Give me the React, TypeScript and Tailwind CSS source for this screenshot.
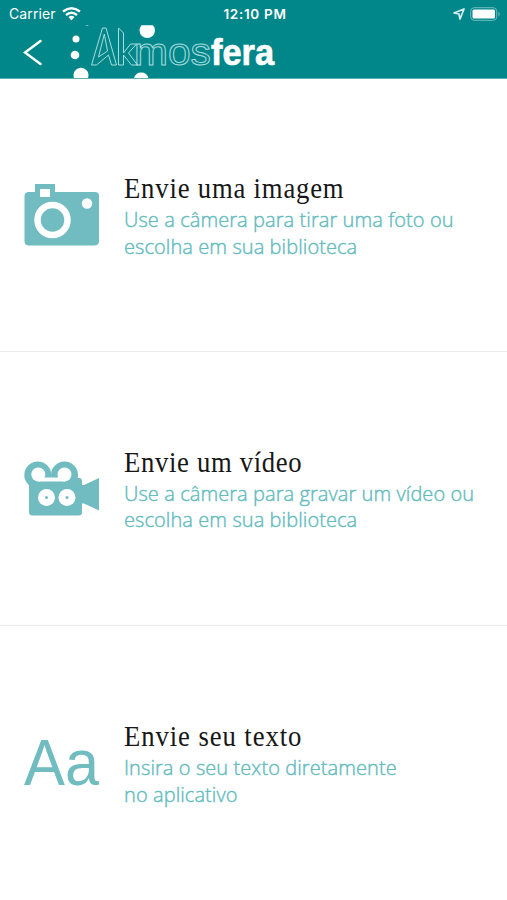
import React from 'react';

interface UploadOption {
  id: string;
  title: string;
  titleSpacing: string;
  rowHeight: string;
  lines: string[];
  icon: React.ReactNode;
}

const CameraIcon = () => (
  <svg width="76" height="62" viewBox="0 0 76 62" fill="#70bcc0">
    <path
      fillRule="evenodd"
      d="M11 0H31V8H71Q75 8 75 12V57Q75 61.500 70 61.500H5Q.500 61.500 .500 57V12Q.500 8 5 8H11ZM16 5V13H26V5Z"
    />
    <circle cx="28.500" cy="36" r="15" stroke="#fff" strokeWidth="6.500" />
    <circle cx="63" cy="19.500" r="5.200" fill="#fff" />
  </svg>
);

const VideoIcon = () => (
  <svg width="76" height="56" viewBox="0 0 76 56" fill="#70bcc0">
    <circle cx="13.800" cy="14" r="13.500" />
    <circle cx="40.500" cy="14" r="13.500" />
    <path d="M5 17H55Q58 17 58 20V24H60L75 17V49.500L60 42.500H58V51Q58 54.500 54.500 54.500H8.500Q5 54.500 5 51Z" />
    <g fill="#fff">
      <circle cx="14.300" cy="13.500" r="7" />
      <circle cx="40.500" cy="13.500" r="7" />
      <path d="M14 16.500H41V20.500H14Z" />
      <circle cx="22.500" cy="36.500" r="8.500" />
      <circle cx="43" cy="36.500" r="8.500" />
    </g>
    <circle cx="22.500" cy="36.500" r="1.500" />
    <circle cx="43" cy="36.500" r="1.500" />
  </svg>
);

const TextIcon = () => (
  <svg width="80" height="84" viewBox="0 0 80 84" className="-mr-1 overflow-visible">
    <text x="0" y="63.500" textLength="75" lengthAdjust="spacingAndGlyphs" fontSize="64" fill="#70bcc0" className="font-['Liberation_Sans',sans-serif]">Aa</text>
  </svg>
);

const OPTIONS: UploadOption[] = [
  {
    id: 'image',
    title: 'Envie uma imagem',
    titleSpacing: 'tracking-[0.88px]',
    rowHeight: 'h-[273px]',
    lines: ['Use a câmera para tirar uma foto ou', 'escolha em sua biblioteca'],
    icon: <CameraIcon />,
  },
  {
    id: 'video',
    title: 'Envie um vídeo',
    titleSpacing: 'tracking-[0.72px]',
    rowHeight: 'h-[274px]',
    lines: ['Use a câmera para gravar um vídeo ou', 'escolha em sua biblioteca'],
    icon: <VideoIcon />,
  },
  {
    id: 'text',
    title: 'Envie seu texto',
    titleSpacing: 'tracking-[1px]',
    rowHeight: 'h-[274px]',
    lines: ['Insira o seu texto diretamente', 'no aplicativo'],
    icon: <TextIcon />,
  },
];

// Outlined "Akmos" runs into the solid "fera"
const Logo = () => (
  <svg width="206" height="54" viewBox="70 25 206 54" fill="#fff" className="font-['Liberation_Sans',sans-serif]">
    <circle cx="76" cy="39" r="3.500" />
    <circle cx="75" cy="55" r="4.300" />
    <path d="M74 78A7.500 7.500 0 1 1 88 78Z" />
    <path d="M141.500 25.300H153A7.700 7.700 0 1 1 141.500 25.300Z" />
    <path d="M134 78A7.500 7.500 0 0 1 148.500 78Z" />
    <path d="M85 25H89L87 26Z" opacity=".6" />
    <g fill="none" stroke="#a8dddf" strokeWidth="1">
      <path d="M91.500 65L102.500 28H106L116.500 65H111.500L108.500 55L96.500 65ZM104.300 34L98.500 57L107.500 51Z" />
      <path d="M118.500 65V28L123.500 33V53L130.500 44H136.500L128.500 53L137.500 65H131.500L123.500 55V65Z" />
      <text x="134" y="65" textLength="77" lengthAdjust="spacingAndGlyphs" fontSize="39">mos</text>
    </g>
    <text x="211" y="65" textLength="63" lengthAdjust="spacingAndGlyphs" fontSize="36" fontWeight="700" stroke="#fff" strokeWidth=".7">fera</text>
  </svg>
);

const StatusBar = () => (
  <div className="grid h-[25px] grid-cols-3 items-center pt-[3px] pr-1.5 pl-[9px] font-['Inter',sans-serif] text-[14px] leading-5">
    <div className="flex items-center gap-[6px]">
      <span className="tracking-[0.1px]">Carrier</span>
      <svg width="19" height="14" viewBox="0 0 19 14" fill="none" stroke="white" strokeWidth="2.400">
        <path d="M1 4.500Q9.500-2 18 4.500M4 8Q9.500 3.500 15 8" />
        <path d="M6.500 10Q9.500 7.500 12.500 10L9.500 13.500Z" fill="white" stroke="none" />
      </svg>
    </div>
    <span className="text-center text-[13.5px] font-semibold tracking-[0.7px]">12:10 PM</span>
    <div className="flex items-center justify-end gap-[5px]">
      <svg width="12" height="12" viewBox="0 0 12 12" fill="none" stroke="#d5f0f0" strokeWidth="1.700">
        <path d="M1 5L11 1L7 11L6 6Z" strokeLinejoin="round" />
      </svg>
      <svg width="31" height="14" viewBox="0 0 31 14">
        <rect x=".700" y=".700" width="26" height="12.600" rx="3.500" fill="none" stroke="#72bec0" />
        <rect x="2.500" y="2.500" width="22.500" height="9" rx="1.500" fill="white" />
        <path d="M28.500 4.500Q31 7 28.500 9.500Z" fill="#72bec0" />
      </svg>
    </div>
  </div>
);

const App: React.FC = () => {
  return (
    <div className="flex h-[900px] w-[507px] flex-col overflow-hidden bg-white">
      <header className="h-[79px] shrink-0 bg-[#018689] text-white">
        <StatusBar />
        <div className="flex h-[54px] items-start border-b border-[#5bb1b3] pl-[13px]">
          <button aria-label="Voltar" className="mr-[17px] flex h-[54px] w-10 items-center justify-center">
            <svg width="20" height="28" viewBox="0 0 20 28" fill="none" stroke="white" strokeWidth="2.500" strokeLinecap="round">
              <path d="M17.500 3L2 14.500L17.500 26" />
            </svg>
          </button>
          <Logo />
        </div>
      </header>

      <main className="flex flex-col divide-y divide-[#ececec]">
        {OPTIONS.map((option) => (
          <button key={option.id} className={`flex shrink-0 items-center gap-6 pl-6 text-left ${option.rowHeight}`}>
            <span className="w-[76px] shrink-0">{option.icon}</span>
            <span className="flex flex-col pt-0.5 whitespace-nowrap">
              <span
                className={`mb-0.5 origin-left scale-x-[0.92] font-['Liberation_Serif',serif] text-[29px] leading-[33px] text-[#171717] ${option.titleSpacing}`}
              >
                {option.title}
              </span>
              {option.lines.map((line) => (
                <span
                  key={line}
                  className="font-['Open_Sans',sans-serif] text-[20px] leading-[26.5px] font-light tracking-[0.08px] text-[#62bbbd] [-webkit-text-stroke:0.4px_#62bbbd]"
                >
                  {line}
                </span>
              ))}
            </span>
          </button>
        ))}
      </main>
    </div>
  );
};

export default App;
